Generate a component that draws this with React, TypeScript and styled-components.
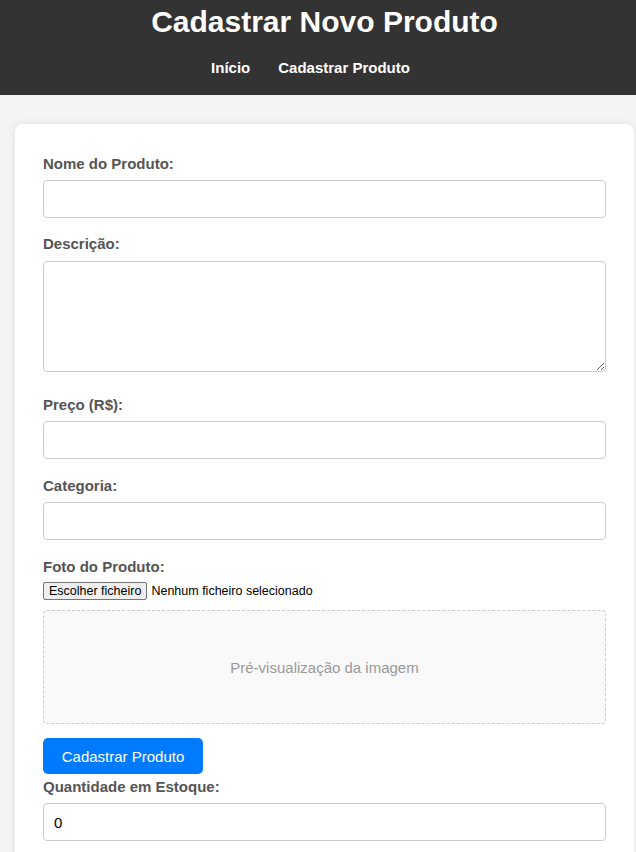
import React from "react";
import styled, { createGlobalStyle } from "styled-components";

const Global = createGlobalStyle`
  html, body { margin: 0; padding: 0; }
  body {
    background: #f4f4f4;
    font-family: "Liberation Sans", Arial, sans-serif;
    color: #333;
  }
  * { box-sizing: border-box; }
`;

const Header = styled.header`
  background: #333;
  color: #fff;
  height: 95px;
  padding-top: 4px;
  text-align: center;
`;

const Title = styled.h1`
  margin: 0;
  padding-left: 13px;
  font-size: 30px;
  line-height: 36px;
  font-weight: bold;
`;

const Nav = styled.nav`
  margin-top: 19px;
  padding-right: 15px;
  display: flex;
  justify-content: center;
  gap: 28px;
`;

const NavLink = styled.a`
  color: #fff;
  text-decoration: none;
  font-weight: bold;
  font-size: 15px;
  line-height: 18px;
`;

const Card = styled.main`
  margin: 29px 2px 0 15px;
  background: #fff;
  border-radius: 8px;
  box-shadow: 0 0 10px rgba(0, 0, 0, 0.08);
  padding: 31px 28px 20px 28px;
`;

const Label = styled.label<{ $gap?: number }>`
  display: block;
  font-weight: bold;
  font-size: 15px;
  line-height: 17px;
  color: #555;
  margin-bottom: ${(p) => (p.$gap ?? 8)}px;
`;

const Input = styled.input<{ $after?: number }>`
  display: block;
  width: 100%;
  height: 38px;
  padding: 0 10px;
  border: 1px solid #ccc;
  border-radius: 4px;
  font-family: "Liberation Sans", Arial, sans-serif;
  font-size: 15px;
  color: #000;
  margin-bottom: ${(p) => (p.$after ?? 17)}px;
  outline: none;
`;

const TextArea = styled.textarea`
  display: block;
  width: 100%;
  height: 111px;
  padding: 10px;
  border: 1px solid #ccc;
  border-radius: 4px;
  font-family: "Liberation Sans", Arial, sans-serif;
  font-size: 15px;
  margin-bottom: 24px;
  outline: none;
`;

const FileRow = styled.div`
  display: flex;
  align-items: center;
  gap: 4px;
  height: 18px;
  margin-bottom: 10px;
  font-family: "Liberation Sans", Arial, sans-serif;
  font-size: 12.5px;
  color: #000;
`;

const FileButton = styled.button`
  height: 18px;
  padding: 0 5px;
  font-family: "Liberation Sans", Arial, sans-serif;
  font-size: 12.5px;
  line-height: 16px;
  color: #000;
  background: #efefef;
  border: 1px solid #767676;
  border-radius: 2px;
`;

const Preview = styled.div`
  height: 114px;
  border: 1px dashed #ccc;
  border-radius: 4px;
  background: #f9f9f9;
  display: flex;
  align-items: center;
  justify-content: center;
  color: #999;
  font-size: 15px;
  margin-bottom: 14px;
`;

const SubmitButton = styled.button`
  display: block;
  width: 160px;
  height: 36px;
  background: #007bff;
  color: #fff;
  border: none;
  border-radius: 5px;
  font-family: "Liberation Sans", Arial, sans-serif;
  font-size: 15px;
  margin-bottom: 4px;
`;

export default function App() {
  return (
    <>
      <Global />
      <Header>
        <Title>Cadastrar Novo Produto</Title>
        <Nav>
          <NavLink href="#">Início</NavLink>
          <NavLink href="#">Cadastrar Produto</NavLink>
        </Nav>
      </Header>
      <Card>
        <form onSubmit={(e) => e.preventDefault()}>
          <Label htmlFor="nome">Nome do Produto:</Label>
          <Input id="nome" type="text" />
          <Label htmlFor="desc" $gap={9}>Descrição:</Label>
          <TextArea id="desc" />
          <Label htmlFor="preco">Preço (R$):</Label>
          <Input id="preco" type="text" $after={18} />
          <Label htmlFor="cat">Categoria:</Label>
          <Input id="cat" type="text" $after={18} />
          <Label $gap={7}>Foto do Produto:</Label>
          <FileRow>
            <FileButton type="button">Escolher ficheiro</FileButton>
            <span>Nenhum ficheiro selecionado</span>
          </FileRow>
          <Preview>Pré-visualização da imagem</Preview>
          <SubmitButton type="submit">Cadastrar Produto</SubmitButton>
          <Label htmlFor="qtd">Quantidade em Estoque:</Label>
          <Input id="qtd" type="text" defaultValue="0" />
        </form>
      </Card>
    </>
  );
}
